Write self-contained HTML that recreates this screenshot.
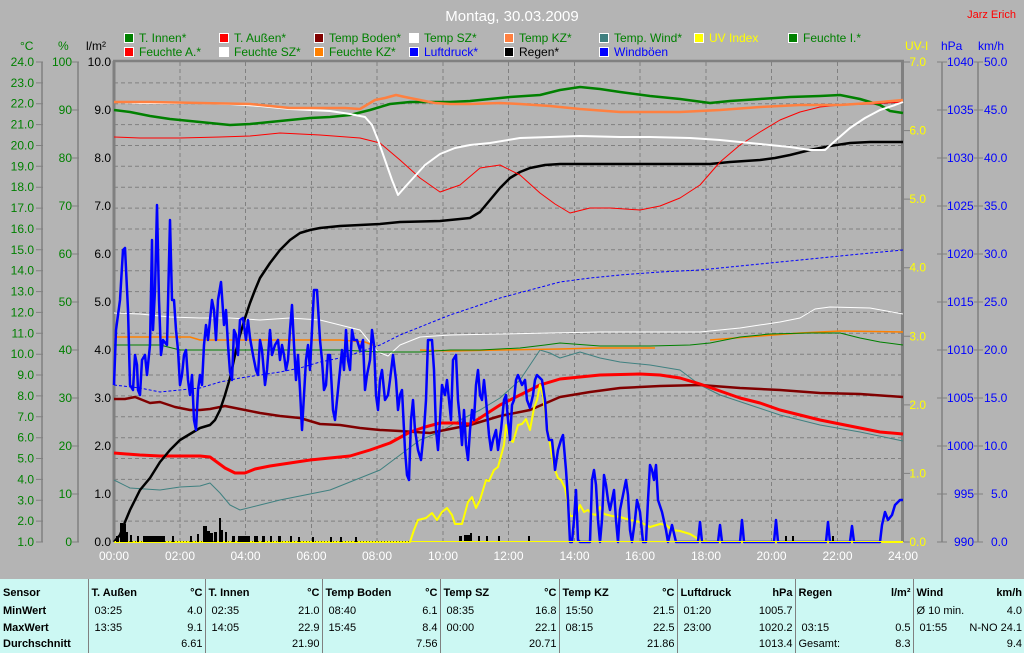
<!DOCTYPE html>
<html><head><meta charset="utf-8"><style>
html,body{margin:0;padding:0;background:#b4b4b4;width:1024px;height:653px;overflow:hidden}
svg{position:absolute;left:0;top:0}
.t{font-family:"Liberation Sans",sans-serif;font-size:12px}
table{position:absolute;left:0;top:579px;width:1024px;height:74px;border-collapse:collapse;table-layout:fixed;background:#ccf8f3;font-family:"Liberation Sans",sans-serif;font-size:11px;color:#000}
td{padding:0 2px 0 3px;height:16px;line-height:15px;white-space:nowrap;overflow:hidden}
tr:first-child td{height:20px;padding-top:4px}
td.b{font-weight:bold}
td.r{text-align:right}
td.s{border-left:1px solid #808080}
</style></head><body>
<svg width="1024" height="653" viewBox="0 0 1024 653">
<g class="t">
<text x="512" y="21" fill="#fff" font-size="15" text-anchor="middle">Montag, 30.03.2009</text>
<text x="1016" y="18" fill="#f00" font-size="11" text-anchor="end">Jarz Erich</text>
</g>
<g class="t" font-size="11.5">
<g stroke="#fff" stroke-width="1">
<rect x="124.5" y="33.5" width="9" height="9" fill="#008000"/>
<rect x="219.5" y="33.5" width="9" height="9" fill="#f00"/>
<rect x="314.5" y="33.5" width="9" height="9" fill="#800000"/>
<rect x="409.5" y="33.5" width="9" height="9" fill="#fff"/>
<rect x="504.5" y="33.5" width="9" height="9" fill="#ff8040"/>
<rect x="599.5" y="33.5" width="9" height="9" fill="#408080"/>
<rect x="694.5" y="33.5" width="9" height="9" fill="#ff0"/>
<rect x="788.5" y="33.5" width="9" height="9" fill="#008000"/>
<rect x="124.5" y="47.5" width="9" height="9" fill="#f00"/>
<rect x="219.5" y="47.5" width="9" height="9" fill="#fff"/>
<rect x="314.5" y="47.5" width="9" height="9" fill="#ff8000"/>
<rect x="409.5" y="47.5" width="9" height="9" fill="#00f"/>
<rect x="504.5" y="47.5" width="9" height="9" fill="#000"/>
<rect x="599.5" y="47.5" width="9" height="9" fill="#00f"/>
</g>
<g fill="#008000">
<text x="139" y="42">T. Innen*</text><text x="234" y="42">T. Außen*</text><text x="329" y="42">Temp Boden*</text><text x="424" y="42">Temp SZ*</text><text x="519" y="42">Temp KZ*</text><text x="614" y="42">Temp. Wind*</text><text x="803" y="42">Feuchte I.*</text>
<text x="139" y="56">Feuchte A.*</text><text x="234" y="56">Feuchte SZ*</text><text x="329" y="56">Feuchte KZ*</text>
</g>
<text x="709" y="42" fill="#ff0">UV Index</text>
<text x="424" y="56" fill="#00f">Luftdruck*</text>
<text x="519" y="56" fill="#000">Regen*</text>
<text x="614" y="56" fill="#00f">Windböen</text>
</g>
<g class="t" font-size="11.5">
<text x="20" y="50" fill="#008000">°C</text>
<text x="58" y="50" fill="#008000">%</text>
<text x="86" y="50" fill="#000">l/m²</text>
<text x="905" y="50" fill="#ff0">UV-I</text>
<text x="941" y="50" fill="#00f">hPa</text>
<text x="978" y="50" fill="#00f">km/h</text>
</g>
<g stroke="#808080" stroke-dasharray="4,3" stroke-width="1">
<path d="M114 82.9H903M114 103.7H903M114 124.6H903M114 145.5H903M114 166.3H903M114 187.2H903M114 208.1H903M114 229H903M114 249.8H903M114 270.7H903M114 291.6H903M114 312.4H903M114 333.3H903M114 354.2H903M114 375H903M114 395.9H903M114 416.8H903M114 437.7H903M114 458.5H903M114 479.4H903M114 500.3H903M114 521.1H903"/>
<path d="M180 62V542M245.5 62V542M311.5 62V542M377 62V542M443 62V542M508.5 62V542M574.5 62V542M640 62V542M706 62V542M771.5 62V542M837.5 62V542"/>
</g>
<g stroke="#808080" fill="none">
<path d="M42 62V542M78 62V542M942 62V542M978 62V542" stroke-width="1.5"/>
<path d="M113 61H904" stroke-width="2.5"/>
<path d="M114 61V542M902.5 61V542" stroke-width="3"/>
<path d="M36 62h7M36 82.9h7M36 103.7h7M36 124.6h7M36 145.5h7M36 166.3h7M36 187.2h7M36 208.1h7M36 229h7M36 249.8h7M36 270.7h7M36 291.6h7M36 312.4h7M36 333.3h7M36 354.2h7M36 375h7M36 395.9h7M36 416.8h7M36 437.7h7M36 458.5h7M36 479.4h7M36 500.3h7M36 521.1h7M36 542h7"/>
<path d="M72 62h7M72 110h7M72 158h7M72 206h7M72 254h7M72 302h7M72 350h7M72 398h7M72 446h7M72 494h7M72 542h7"/>
<path d="M904 62h6M904 130.6h6M904 199.1h6M904 267.7h6M904 336.3h6M904 404.9h6M904 473.4h6M904 542h6"/>
<path d="M937 62h10M937 110h10M937 158h10M937 206h10M937 254h10M937 302h10M937 350h10M937 398h10M937 446h10M937 494h10M937 542h10"/>
<path d="M974 62h9M974 110h9M974 158h9M974 206h9M974 254h9M974 302h9M974 350h9M974 398h9M974 446h9M974 494h9M974 542h9"/>
</g>
<g class="t" fill="#008000" text-anchor="end" font-size="11.5">
<text x="34" y="66">24.0</text><text x="34" y="86.9">23.0</text><text x="34" y="107.7">22.0</text><text x="34" y="128.6">21.0</text><text x="34" y="149.5">20.0</text><text x="34" y="170.3">19.0</text><text x="34" y="191.2">18.0</text><text x="34" y="212.1">17.0</text><text x="34" y="233">16.0</text><text x="34" y="253.8">15.0</text><text x="34" y="274.7">14.0</text><text x="34" y="295.6">13.0</text><text x="34" y="316.4">12.0</text><text x="34" y="337.3">11.0</text><text x="34" y="358.2">10.0</text><text x="34" y="379">9.0</text><text x="34" y="399.9">8.0</text><text x="34" y="420.8">7.0</text><text x="34" y="441.7">6.0</text><text x="34" y="462.5">5.0</text><text x="34" y="483.4">4.0</text><text x="34" y="504.3">3.0</text><text x="34" y="525.1">2.0</text><text x="34" y="546">1.0</text>
<text x="72" y="66">100</text><text x="72" y="114">90</text><text x="72" y="162">80</text><text x="72" y="210">70</text><text x="72" y="258">60</text><text x="72" y="306">50</text><text x="72" y="354">40</text><text x="72" y="402">30</text><text x="72" y="450">20</text><text x="72" y="498">10</text><text x="72" y="546">0</text>
</g>
<g class="t" fill="#000" text-anchor="end" font-size="11.5">
<text x="111" y="66">10.0</text><text x="111" y="114">9.0</text><text x="111" y="162">8.0</text><text x="111" y="210">7.0</text><text x="111" y="258">6.0</text><text x="111" y="306">5.0</text><text x="111" y="354">4.0</text><text x="111" y="402">3.0</text><text x="111" y="450">2.0</text><text x="111" y="498">1.0</text><text x="111" y="546">0.0</text>
</g>
<g class="t" fill="#ff0" text-anchor="end" font-size="11.5">
<text x="926" y="66">7.0</text><text x="926" y="134.6">6.0</text><text x="926" y="203.1">5.0</text><text x="926" y="271.7">4.0</text><text x="926" y="340.3">3.0</text><text x="926" y="408.9">2.0</text><text x="926" y="477.4">1.0</text><text x="926" y="546">0.0</text>
</g>
<g class="t" fill="#00f" font-size="11.5">
<text x="947" y="66">1040</text><text x="947" y="114">1035</text><text x="947" y="162">1030</text><text x="947" y="210">1025</text><text x="947" y="258">1020</text><text x="947" y="306">1015</text><text x="947" y="354">1010</text><text x="947" y="402">1005</text><text x="947" y="450">1000</text><text x="954" y="498">995</text><text x="954" y="546">990</text>
<text x="984" y="66">50.0</text><text x="984" y="114">45.0</text><text x="984" y="162">40.0</text><text x="984" y="210">35.0</text><text x="984" y="258">30.0</text><text x="984" y="306">25.0</text><text x="984" y="354">20.0</text><text x="984" y="402">15.0</text><text x="984" y="450">10.0</text><text x="991" y="498">5.0</text><text x="991" y="546">0.0</text>
</g>
<g class="t" fill="#fff" text-anchor="middle" font-size="11.5">
<text x="114" y="560">00:00</text><text x="180" y="560">02:00</text><text x="245.5" y="560">04:00</text><text x="311.5" y="560">06:00</text><text x="377" y="560">08:00</text><text x="443" y="560">10:00</text><text x="508.5" y="560">12:00</text><text x="574.5" y="560">14:00</text><text x="640" y="560">16:00</text><text x="706" y="560">18:00</text><text x="771.5" y="560">20:00</text><text x="837.5" y="560">22:00</text><text x="903" y="560">24:00</text>
</g>
<g fill="none" stroke-linejoin="round">
<polyline stroke="#408080" stroke-width="1" points="114,480 130,488 160,490 180,487 200,486 210,483 220,493 230,505 240,510 260,505 280,500 300,496 330,490 360,478 380,470 400,455 420,440 440,432 460,420 480,410 500,398 520,380 540,350 550,353 560,358 580,352 600,358 620,362 650,365 680,370 700,385 720,395 750,405 780,415 820,425 860,432 903,441"/>
<polyline stroke="#fff" stroke-width="1" points="114,313 140,314 170,317 200,318 230,318 260,320 290,318 320,320 340,325 360,330 378,352 388,356 400,345 420,337 450,335 500,334 550,333 600,332 650,332 700,332 740,328 780,322 800,318 815,309 830,307 870,308 903,314"/>
<polyline stroke="#ff8000" stroke-width="1.5" points="114,337 190,337 200,340 250,340 300,340 340,340 365,342 375,346"/>
<polyline stroke="#ff8000" stroke-width="1.5" points="420,350 450,351 500,350 560,349 600,348 655,348"/>
<polyline stroke="#ff8000" stroke-width="1.5" points="710,340 760,336 800,333 840,331 903,332"/>
<polyline stroke="#008000" stroke-width="1" points="114,345 160,345 180,350 220,350 260,350 300,350 340,350 380,352 420,352 450,350 480,350 520,348 545,345 560,343 600,346 650,346 690,345 710,343 740,337 770,334 810,333 840,333 860,338 880,342 903,345"/>
<polyline stroke="#00f" stroke-width="1" stroke-dasharray="3,2" points="114,385 140,388 160,392 180,390 200,388 220,382 240,378 260,375 280,372 300,368 320,362 340,358 360,352 380,345 400,335 420,327 450,315 480,305 500,298 530,290 560,282 590,278 620,275 660,272 700,270 740,266 780,262 820,258 860,254 903,250"/>
<polyline stroke="#800000" stroke-width="2.5" points="114,399 125,399 135,397 150,403 160,402 175,407 190,410 200,410 210,409 225,406 240,409 260,413 280,416 300,418 320,424 340,425 360,428 380,430 400,431 430,433 450,429 470,425 500,416 530,410 560,397 590,392 620,388 660,386 700,385 740,388 780,390 820,393 860,394 903,397"/>
<polyline stroke="#f00" stroke-width="3" points="114,453 140,455 160,456 190,456 200,456 210,457 225,468 235,473 245,473 255,469 270,466 290,463 310,460 330,458 350,456 370,450 390,443 410,432 425,427 440,423 455,423 470,424 480,418 500,405 520,395 540,385 560,379 580,377 600,375 640,374 660,375 680,378 700,384 720,391 740,398 760,403 780,410 800,415 820,420 840,424 860,428 880,432 903,434"/>
<polyline stroke="#000" stroke-width="2.5" points="114,542 120,535 125,522 130,510 135,500 140,490 150,478 160,462 170,450 180,440 190,434 200,428 210,425 215,420 220,410 225,395 230,378 235,355 240,335 245,318 250,303 255,290 260,278 270,263 280,250 290,240 300,233 310,230 320,228 340,226 360,225 380,224 400,222 440,221 470,218 480,212 490,200 500,188 510,178 520,172 530,168 545,165 560,164 600,164 640,164 680,164 710,164 730,162 760,160 775,158 790,155 810,150 830,146 850,143 870,142 903,142"/>
<polyline stroke="#008000" stroke-width="2.5" points="114,110 130,112 150,116 170,119 190,121 210,123 230,125 250,124 270,122 290,120 310,118 330,117 350,115 370,110 390,104 410,102 450,102 470,101 490,99 510,97 540,95 560,90 580,87 600,89 620,92 650,96 680,99 710,103 730,101 760,99 790,97 820,96 840,95 860,99 880,105 890,111 903,113"/>
<polyline stroke="#f00" stroke-width="1" points="114,137 140,138 180,138 220,137 250,136 280,133 320,135 360,138 380,143 400,160 420,178 440,192 460,185 480,168 500,165 520,175 540,193 555,204 570,213 590,208 610,208 640,210 660,206 680,198 700,185 720,162 740,145 760,132 780,120 800,112 820,107 840,105 870,104 903,102"/>
<polyline stroke="#fff" stroke-width="2" points="114,102 140,103 170,103 200,103 230,104 260,106 290,109 310,110 330,111 350,114 365,117 372,125 378,140 385,160 392,180 398,195 405,187 415,176 425,165 440,154 455,148 470,145 490,143 520,138 550,137 580,136 620,137 650,137 690,138 720,140 760,144 790,147 810,150 825,150 835,141 850,128 865,118 880,110 895,105 903,102"/>
<polyline stroke="#ff8040" stroke-width="2.5" points="114,102 150,102 200,103 250,104 290,108 320,108 345,108 360,109 375,100 385,98 396,95 405,97 420,100 435,103 450,104 470,104 500,103 520,104 550,106 580,109 620,112 650,112 680,112 700,111 720,110 760,107 800,105 840,105 870,103 903,100"/>
<polyline stroke="#ff0" stroke-width="2" points="114,542 410,542 414,530 418,520 426,518 432,513 437,520 442,512 447,508 452,515 455,524 462,524 468,502 472,497 476,508 480,500 486,480 489,481 494,470 498,467 504,445 506,425 510,440 513,442 518,425 522,424 526,419 530,430 534,408 537,400 540,385 543,395 546,420 549,438 552,456 555,470 558,478 561,480 565,488 570,516 576,516 580,505 584,512 588,510 592,514 596,515 600,507 604,514 612,516 620,517 630,520 640,522 650,527 660,524 666,525 672,530 680,531 690,534 700,540 710,542 903,542"/>
<polyline stroke="#00f" stroke-width="2.5" points="114,385 116,330 120,300 123,250 125,248 128,310 130,385 133,390 135,355 137,365 138,390 140,395 142,360 145,355 147,375 150,345 152,240 153,330 155,290 157,205 159,300 161,355 163,340 167,345 170,220 172,300 174,300 176,330 178,350 180,385 182,375 184,355 186,350 188,380 190,395 192,375 194,420 196,430 198,390 200,375 202,385 204,345 206,325 208,340 210,320 212,300 214,310 216,340 218,300 221,282 224,325 226,310 228,345 230,372 232,380 234,330 236,335 238,355 240,320 243,318 246,340 248,320 250,338 253,355 256,370 258,375 260,340 262,350 265,385 267,370 270,330 272,355 275,345 278,340 280,360 282,345 284,355 286,370 288,360 290,330 292,305 294,345 296,380 298,355 300,390 302,430 304,395 306,360 308,345 310,370 312,330 314,290 317,290 320,340 322,360 324,390 326,385 328,355 330,355 333,410 335,420 338,390 340,370 342,350 344,370 346,330 348,360 350,370 352,330 354,340 357,340 360,350 363,340 365,390 367,375 370,360 372,330 374,345 376,395 378,410 380,380 382,370 385,400 388,395 390,380 393,355 396,380 398,410 400,395 402,390 405,450 407,475 409,480 411,420 413,400 415,430 418,450 421,460 424,430 426,400 428,340 432,340 434,370 436,430 438,450 440,420 442,385 445,395 447,380 449,400 451,420 453,360 456,355 458,400 460,420 462,445 464,410 466,445 468,460 470,430 472,410 474,420 476,385 478,370 480,395 482,400 484,380 486,400 489,435 491,450 493,440 496,430 498,450 501,430 504,400 506,395 508,420 510,440 512,405 514,400 516,380 518,375 520,380 522,385 525,380 527,400 530,408 533,395 535,380 537,375 540,378 542,380 545,400 547,430 549,440 552,440 555,470 558,450 561,440 563,435 566,470 568,500 570,542 572,542 574,520 576,490 578,540 580,542 590,542 592,480 594,470 596,485 598,520 600,542 602,520 604,475 606,485 608,500 610,510 612,500 614,490 616,520 618,542 620,510 624,490 626,480 628,495 630,530 632,542 635,520 637,500 640,512 643,542 646,542 648,500 650,465 652,470 654,480 656,465 658,500 662,512 666,530 668,542 672,525 676,542 698,542 700,522 702,542 718,542 720,525 722,542 740,542 742,520 744,542 774,542 776,520 778,542 826,542 828,522 830,542 850,542 852,526 854,542 880,542 882,525 885,512 888,520 892,515 895,505 900,500 903,500"/>
</g>
<g fill="#000">
<rect x="116" y="536" width="3" height="6"/><rect x="120" y="523" width="3" height="19"/><rect x="123" y="524" width="3" height="18"/><rect x="126" y="532" width="2" height="10"/><rect x="130" y="535" width="2" height="7"/><rect x="137" y="536" width="2" height="6"/>
<rect x="143" y="536" width="22" height="6"/><rect x="172" y="536" width="2" height="6"/><rect x="190" y="536" width="2" height="6"/><rect x="197" y="534" width="2" height="8"/>
<rect x="203" y="526" width="4" height="16"/><rect x="207" y="531" width="3" height="11"/><rect x="210" y="533" width="3" height="9"/><rect x="214" y="532" width="3" height="10"/><rect x="219" y="518" width="2" height="24"/><rect x="221" y="530" width="2" height="12"/><rect x="225" y="532" width="2" height="10"/><rect x="232" y="536" width="3" height="6"/>
<rect x="238" y="536" width="12" height="6"/><rect x="254" y="536" width="4" height="6"/><rect x="262" y="536" width="3" height="6"/><rect x="270" y="536" width="2" height="6"/><rect x="278" y="536" width="3" height="6"/><rect x="290" y="536" width="2" height="6"/><rect x="298" y="537" width="2" height="5"/><rect x="312" y="537" width="2" height="5"/><rect x="330" y="537" width="2" height="5"/><rect x="340" y="537" width="2" height="5"/><rect x="355" y="537" width="2" height="5"/>
<rect x="459" y="536" width="3" height="6"/><rect x="464" y="535" width="8" height="7"/><rect x="470" y="533" width="2" height="9"/><rect x="478" y="536" width="2" height="6"/><rect x="486" y="536" width="2" height="6"/><rect x="498" y="536" width="2" height="6"/><rect x="528" y="536" width="2" height="6"/>
<rect x="785" y="536" width="2" height="6"/><rect x="792" y="536" width="2" height="6"/><rect x="832" y="536" width="2" height="6"/>
</g>
<path d="M114 541.5H903" stroke="#000" stroke-width="1" stroke-dasharray="1,2" opacity=".6"/>
<path d="M410 541.5H903" stroke="#ff0" stroke-width="1"/>
</svg>
<table>
<colgroup>
<col style="width:88px">
<col style="width:82px"><col style="width:35px">
<col style="width:82px"><col style="width:35px">
<col style="width:85px"><col style="width:33px">
<col style="width:82px"><col style="width:37px">
<col style="width:82px"><col style="width:36px">
<col style="width:72px"><col style="width:46px">
<col style="width:76px"><col style="width:42px">
<col style="width:58px"><col style="width:53px">
</colgroup>
<tr><td class="b">Sensor</td><td class="b s">T. Außen</td><td class="b r">°C</td><td class="b s">T. Innen</td><td class="b r">°C</td><td class="b s">Temp Boden</td><td class="b r">°C</td><td class="b s">Temp SZ</td><td class="b r">°C</td><td class="b s">Temp KZ</td><td class="b r">°C</td><td class="b s">Luftdruck</td><td class="b r">hPa</td><td class="b s">Regen</td><td class="b r">l/m²</td><td class="b s">Wind</td><td class="b r">km/h</td></tr>
<tr><td class="b">MinWert</td><td class="s">&nbsp;03:25</td><td class="r">4.0</td><td class="s">&nbsp;02:35</td><td class="r">21.0</td><td class="s">&nbsp;08:40</td><td class="r">6.1</td><td class="s">&nbsp;08:35</td><td class="r">16.8</td><td class="s">&nbsp;15:50</td><td class="r">21.5</td><td class="s">&nbsp;01:20</td><td class="r">1005.7</td><td class="s"></td><td class="r"></td><td class="s" style="overflow:visible">Ø 10 min.</td><td class="r">4.0</td></tr>
<tr><td class="b">MaxWert</td><td class="s">&nbsp;13:35</td><td class="r">9.1</td><td class="s">&nbsp;14:05</td><td class="r">22.9</td><td class="s">&nbsp;15:45</td><td class="r">8.4</td><td class="s">&nbsp;00:00</td><td class="r">22.1</td><td class="s">&nbsp;08:15</td><td class="r">22.5</td><td class="s">&nbsp;23:00</td><td class="r">1020.2</td><td class="s">&nbsp;03:15</td><td class="r">0.5</td><td class="s">&nbsp;01:55</td><td class="r" style="overflow:visible;direction:rtl">N-NO 24.1</td></tr>
<tr><td class="b">Durchschnitt</td><td class="s"></td><td class="r">6.61</td><td class="s"></td><td class="r">21.90</td><td class="s"></td><td class="r">7.56</td><td class="s"></td><td class="r">20.71</td><td class="s"></td><td class="r">21.86</td><td class="s"></td><td class="r">1013.4</td><td class="s">Gesamt:</td><td class="r">8.3</td><td class="s"></td><td class="r">9.4</td></tr>
</table>
</body></html>
